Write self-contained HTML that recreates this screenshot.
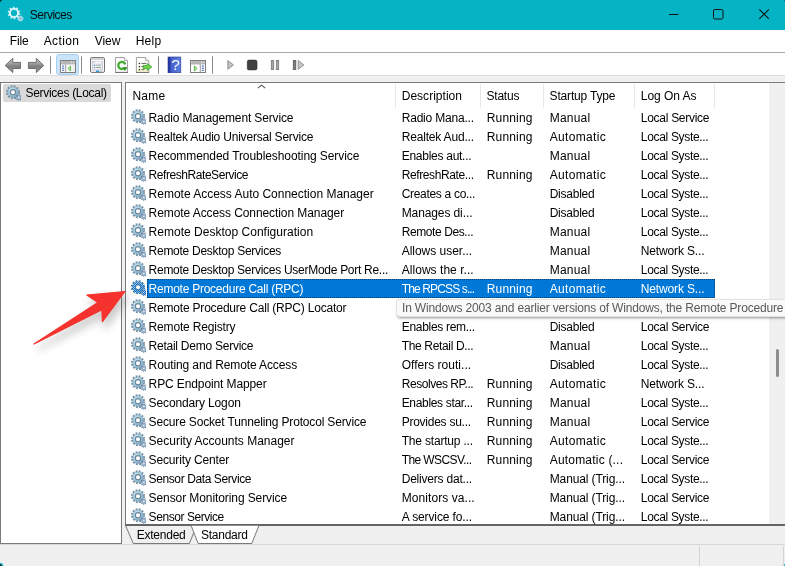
<!DOCTYPE html>
<html><head><meta charset="utf-8"><title>Services</title>
<style>
*{box-sizing:border-box;margin:0;padding:0}
html,body{width:785px;height:566px;overflow:hidden;background:#f0f0f0}
body{position:relative;font-family:"Liberation Sans",sans-serif;font-size:12px;color:#000;letter-spacing:-0.25px}
.abs{position:absolute}
#title{left:0;top:0;width:785px;height:30px;background:#04b4c5}
#title .t{position:absolute;left:30px;top:7px;font-size:12.5px;color:#111}
#menu{left:0;top:30px;width:785px;height:22px;background:#fff}
#menu span{position:absolute;top:4px;font-size:12.5px}
#tbline{left:0;top:52px;width:785px;height:1px;background:#a8a8a8}
#toolbar{left:0;top:53px;width:785px;height:23px;background:#fff;border-bottom:1px solid #dedede}
.sep{position:absolute;top:3px;width:1px;height:18px;background:#8c8c8c}
#tree{left:0;top:82px;width:122px;height:462px;background:#fff;border:1px solid #7a7a7a}
#treeitem{left:3px;top:84px;width:108px;height:18px;background:#d9d9d9;border-radius:2px}
#list{left:125px;top:82px;width:660px;height:444px;background:#fff;border-left:1px solid #7a7a7a;border-top:1px solid #7a7a7a;border-bottom:2px solid #646464}
#sb{left:769px;top:83px;width:16px;height:441px;background:#f0f0f0}
#thumb{left:776px;top:349px;width:3px;height:28px;background:#8d8d8d;border-radius:1.5px}
.hsep{position:absolute;top:84px;width:1px;height:24px;background:#e7e7e7}
.h{position:absolute;top:89px;white-space:nowrap}
.gi{position:absolute;left:130px}
.c{position:absolute;white-space:nowrap;line-height:14px}
.selbg{position:absolute;left:147px;width:568px;height:19px;background:#0078d7;border:1px dotted rgba(10,20,40,.6)}
#tip{left:396px;top:299px;width:400px;height:18px;background:#f9f9f9;border:1px solid #e2e2e2;border-radius:3.5px;box-shadow:0 3px 3px -2px rgba(0,0,0,.42),0 0 1px rgba(0,0,0,.12)}
#status{left:0;top:544px;width:785px;height:22px;background:#f0f0f0;border-top:1px solid #d7d7d7}
#w{position:absolute;left:0;top:0;width:785px;height:566px;will-change:transform}
</style></head><body><div id="w">
<svg width="0" height="0" style="position:absolute">
<defs>
<radialGradient id="gg" cx="35%" cy="30%" r="80%"><stop offset="0" stop-color="#c8e2ee"/><stop offset="0.55" stop-color="#9fc6db"/><stop offset="1" stop-color="#7fa2c0"/></radialGradient>
<g id="gear">
 <circle cx="8" cy="7.2" r="5.9" fill="none" stroke="#6f8da3" stroke-width="2.2" stroke-dasharray="1.8 1.289"/>
 <circle cx="8" cy="7.2" r="5.3" fill="url(#gg)" stroke="#86a6ba" stroke-width="0.6"/>
 <circle cx="8" cy="7.2" r="2.6" fill="#fff" stroke="#688698" stroke-width="1.1"/>
 <circle cx="13.8" cy="12.5" r="2.7" fill="none" stroke="#5f7c9c" stroke-width="1.3" stroke-dasharray="0.95 0.93"/>
 <circle cx="13.8" cy="12.5" r="2.2" fill="#9db6cf" stroke="#6f8cab" stroke-width="0.5"/>
 <circle cx="13.8" cy="12.5" r="0.8" fill="#e8f0f6"/>
</g>
<g id="gears">
 <use href="#gear"/>
 <rect x="0" y="0" width="16" height="16" fill="url(#chk)" mask="url(#gm)"/>
</g>
<pattern id="chk" width="2" height="2" patternUnits="userSpaceOnUse"><rect x="0" y="0" width="1" height="1" fill="#0a6fd0"/><rect x="1" y="1" width="1" height="1" fill="#0a6fd0"/></pattern>
<mask id="gm" maskUnits="userSpaceOnUse" x="0" y="0" width="16" height="16"><circle cx="8" cy="7.2" r="5.9" fill="none" stroke="#fff" stroke-width="2.2" stroke-dasharray="1.8 1.289"/><circle cx="8" cy="7.2" r="5.5" fill="#fff"/><circle cx="13.8" cy="12.5" r="2.7" fill="none" stroke="#fff" stroke-width="1.3" stroke-dasharray="0.95 0.93"/><circle cx="13.8" cy="12.5" r="2.4" fill="#fff"/><circle cx="8" cy="7.2" r="2.1" fill="#000"/></mask>
</defs></svg>

<div id="title" class="abs"></div>
<svg class="abs" style="left:0;top:0" width="785" height="29" viewBox="0 0 785 29">
<path d="M0 0 H3 A3 3 0 0 0 0 3 Z" fill="#050505"/>
<path d="M785 0 H783.5 A1.5 1.5 0 0 1 785 1.5 Z" fill="#0a0a0a"/>
<!-- app icon -->
<circle cx="14" cy="13" r="5.3" fill="none" stroke="#c9ecf6" stroke-width="2" stroke-dasharray="1.7 1.63"/>
<circle cx="14" cy="13" r="4.1" fill="none" stroke="#e3f4fa" stroke-width="1.9"/>
<circle cx="20.4" cy="18.5" r="1.9" fill="#7fb9c9" stroke="#b4e2f0" stroke-width="1.2"/>
<circle cx="20.4" cy="18.5" r="2.7" fill="none" stroke="#a9dcec" stroke-width="0.8" stroke-dasharray="0.9 0.8"/>
<!-- window controls -->
<rect x="669" y="14" width="9.5" height="1" fill="#111"/>
<rect x="713.5" y="9.5" width="9.5" height="9.5" rx="1.4" fill="none" stroke="#111" stroke-width="1"/>
<path d="M759.3 9.3 L768.9 18.9 M768.9 9.3 L759.3 18.9" stroke="#111" stroke-width="1.05" fill="none"/>
</svg>

<div id="menu" class="abs"></div>
<div id="tbline" class="abs"></div>
<div id="toolbar" class="abs">
<svg class="abs" style="left:0;top:0" width="785" height="23" viewBox="0 53 785 23">
<defs>
<linearGradient id="ag" x1="0" y1="0" x2="0" y2="1"><stop offset="0" stop-color="#c4c4c4"/><stop offset="0.3" stop-color="#a8a8a8"/><stop offset="0.6" stop-color="#7c7c7c"/><stop offset="1" stop-color="#b0b0b0"/></linearGradient>
<linearGradient id="hg" x1="0" y1="0" x2="1" y2="0"><stop offset="0" stop-color="#3d56c4"/><stop offset="1" stop-color="#5e7fe0"/></linearGradient>
<linearGradient id="pg" x1="0" y1="0" x2="0" y2="1"><stop offset="0" stop-color="#ffffff"/><stop offset="1" stop-color="#f4f4f4"/></linearGradient>
<linearGradient id="pgy" x1="0" y1="0" x2="0" y2="1"><stop offset="0" stop-color="#ffffff"/><stop offset="0.6" stop-color="#fdfdf4"/><stop offset="1" stop-color="#f3f3c8"/></linearGradient>
</defs>
<!-- back / forward -->
<path d="M5.2 65.4 L12.8 58.4 V62.4 H20.5 V68.5 H12.8 V72.5 Z" fill="url(#ag)" stroke="#6c6c6c" stroke-width="1" stroke-linejoin="round"/>
<path d="M43.8 65.4 L36.3 58.4 V62.4 H28.4 V68.5 H36.3 V72.5 Z" fill="url(#ag)" stroke="#6c6c6c" stroke-width="1" stroke-linejoin="round"/>
<rect x="50" y="56.3" width="1" height="17.4" fill="#8a8a8a"/>
<!-- active button -->
<rect x="56.5" y="54.5" width="22" height="20" rx="2.5" fill="#cce4f8" stroke="#a6d0f4" stroke-width="1"/>
<!-- console tree icon -->
<g>
<rect x="60.5" y="60.5" width="15" height="12" fill="#fff" stroke="#7e7e7e" stroke-width="1"/>
<rect x="61" y="61" width="14" height="2.4" fill="#e4e4e4"/>
<rect x="61.6" y="61.5" width="9.4" height="1" fill="#8a8a8a"/><rect x="71.8" y="61.4" width="1.1" height="1.1" fill="#8a8a8a"/><rect x="73.6" y="61.4" width="1.1" height="1.1" fill="#8a8a8a"/>
<rect x="61" y="63.4" width="14" height="0.9" fill="#8c8c8c"/>
<rect x="65.3" y="64.3" width="0.9" height="8" fill="#8c8c8c"/>
<rect x="72.6" y="64.6" width="2.4" height="7.4" fill="#ececec"/>
<rect x="62" y="65.6" width="2.2" height="1" fill="#3b5fc0"/><rect x="62" y="67.7" width="2.2" height="1" fill="#3b5fc0"/><rect x="62" y="69.8" width="2.2" height="1" fill="#3b5fc0"/>
<path d="M70.6 66 L67.9 68.5 L70.6 71 Z" fill="#c5ecb0" stroke="#3fa32a" stroke-width="0.8" stroke-linejoin="round"/>
</g>
<rect x="81" y="56.3" width="1" height="17.4" fill="#8a8a8a"/>
<!-- properties icon -->
<g>
<rect x="90.5" y="57.6" width="14" height="14.8" rx="1.3" fill="#fafafa" stroke="#707070" stroke-width="1"/>
<rect x="91.2" y="58.3" width="12.6" height="1.5" fill="#c9c9c9"/>
<rect x="92.6" y="61.5" width="9.8" height="8.6" fill="#e9e9f4" stroke="#b4b4c4" stroke-width="0.6"/>
<rect x="95.6" y="61.5" width="2.2" height="1.3" fill="#fff"/><rect x="98.6" y="61.5" width="2.4" height="1.3" fill="#fff"/>
<rect x="94" y="64.6" width="1.1" height="1.1" fill="#3b78c8"/><rect x="96.2" y="64.7" width="4.8" height="0.9" fill="#8fa88f"/>
<rect x="94" y="67" width="1.1" height="1.1" fill="#8a6fc0"/><rect x="96.2" y="67.1" width="4.8" height="0.9" fill="#8fa88f"/>
<rect x="96" y="70.6" width="3.2" height="1.4" fill="#2a9be0"/><rect x="100.2" y="70.6" width="2.2" height="1.4" fill="#c4c4c4"/>
</g>
<!-- refresh icon -->
<g>
<path d="M115.5 57.5 H124.5 L127.5 60.5 V72.4 H115.5 Z" fill="url(#pg)" stroke="#9a9a9a" stroke-width="0.9"/>
<path d="M124.5 57.5 V60.5 H127.5" fill="#fff" stroke="#9a9a9a" stroke-width="0.8"/>
<rect x="115.2" y="72.1" width="12.7" height="0.9" fill="#6e6e6e"/>
<path d="M124.3 68.0 A3.55 3.55 0 1 1 125.2 64.3" fill="none" stroke="#43ad2f" stroke-width="2.3"/>
<path d="M122.6 66.9 L127.4 67.3 L125.0 71.0 Z" fill="#2c9020"/>
</g>
<!-- export icon -->
<g>
<path d="M136.4 57.5 H145.6 L148.8 60.7 V72.4 H136.4 Z" fill="url(#pgy)" stroke="#9a9a9a" stroke-width="0.9"/>
<path d="M145.6 57.5 V60.7 H148.8" fill="#fff" stroke="#9a9a9a" stroke-width="0.8"/>
<rect x="136.1" y="72.1" width="13" height="0.9" fill="#6e6e6e"/>
<rect x="138.8" y="62.8" width="1.3" height="1.3" fill="#222"/><rect x="138.8" y="66" width="1.3" height="1.3" fill="#222"/><rect x="138.8" y="69" width="1.3" height="1.3" fill="#222"/>
<rect x="141.4" y="62.9" width="5" height="1" fill="#666"/><rect x="141.4" y="66.1" width="3" height="1" fill="#666"/><rect x="141.4" y="69.1" width="3" height="1" fill="#666"/>
<path d="M143.2 65.4 H147.4 V63.6 L151.8 67 L147.4 70.4 V68.6 H143.2 Z" fill="#6fcf4a" stroke="#3aa428" stroke-width="0.8" stroke-linejoin="round"/>
</g>
<rect x="158" y="56.3" width="1" height="17.4" fill="#8a8a8a"/>
<!-- help icon -->
<g>
<rect x="168" y="57" width="12.8" height="15.7" fill="url(#hg)"/>
<rect x="168" y="57" width="2.4" height="15.7" fill="#2537a0"/>
<rect x="168" y="57" width="12.8" height="15.7" fill="none" stroke="#27358f" stroke-width="0.6"/>
<text x="175.5" y="70.2" font-family="Liberation Sans, sans-serif" font-size="15.5" fill="#fff" text-anchor="middle">?</text>
</g>
<!-- action pane icon -->
<g>
<rect x="190.5" y="60.5" width="15" height="12" fill="#fff" stroke="#7e7e7e" stroke-width="1"/>
<rect x="191" y="61" width="14" height="2.4" fill="#e4e4e4"/>
<rect x="191.6" y="61.5" width="9.4" height="1" fill="#8a8a8a"/><rect x="201.8" y="61.4" width="1.1" height="1.1" fill="#8a8a8a"/><rect x="203.6" y="61.4" width="1.1" height="1.1" fill="#8a8a8a"/>
<rect x="191" y="63.4" width="14" height="0.9" fill="#8c8c8c"/>
<rect x="199.8" y="64.3" width="0.9" height="8" fill="#8c8c8c"/>
<rect x="201.8" y="65.6" width="2.2" height="1" fill="#3b5fc0"/><rect x="201.8" y="67.7" width="2.2" height="1" fill="#3b5fc0"/><rect x="201.8" y="69.8" width="2.2" height="1" fill="#3b5fc0"/>
<path d="M194.4 66 L197.1 68.5 L194.4 71 Z" fill="#c5ecb0" stroke="#3fa32a" stroke-width="0.8" stroke-linejoin="round"/>
</g>
<rect x="212" y="56.3" width="1" height="17.4" fill="#8a8a8a"/>
<!-- play -->
<path d="M227.8 60.5 L233.4 64.9 L227.8 69.3 Z" fill="#c4c4c4" stroke="#8a8a8a" stroke-width="0.9" stroke-linejoin="round"/>
<!-- stop -->
<rect x="247.3" y="60.1" width="9.7" height="9.8" rx="1.6" fill="#404040" stroke="#2c2c2c" stroke-width="0.6"/>
<!-- pause -->
<rect x="271.3" y="60.4" width="2.4" height="9.2" fill="#a4a4a4" stroke="#787878" stroke-width="0.8"/>
<rect x="276.3" y="60.4" width="2.4" height="9.2" fill="#a4a4a4" stroke="#787878" stroke-width="0.8"/>
<!-- restart -->
<rect x="293.3" y="60.4" width="2.5" height="9.2" fill="#7a7a7a" stroke="#5a5a5a" stroke-width="0.8"/>
<path d="M298.2 60.5 L303.9 64.9 L298.2 69.3 Z" fill="#c4c4c4" stroke="#8a8a8a" stroke-width="0.9" stroke-linejoin="round"/>
</svg>

</div>
<div id="tree" class="abs"></div>
<div id="treeitem" class="abs"></div>
<svg class="abs" style="left:5px;top:85px" width="16" height="16" viewBox="0 0 16 16"><use href="#gear"/></svg>
<div id="list" class="abs"></div>
<div class="hsep" style="left:395px"></div><div class="hsep" style="left:480px"></div><div class="hsep" style="left:543px"></div><div class="hsep" style="left:634px"></div><div class="hsep" style="left:714px"></div>
<svg class="abs" style="left:255px;top:83px" width="14" height="7" viewBox="255 83 14 7"><path d="M257.8 88.2 L261.5 85.1 L265.2 88.2" fill="none" stroke="#555" stroke-width="1.1"/></svg>
<svg class="gi" style="top:109px" width="16" height="16" viewBox="0 0 16 16"><use href="#gear"/></svg>
<span class="c" style="left:148.6px;top:111px;letter-spacing:-0.138px">Radio Management Service</span>
<span class="c" style="left:401.7px;top:111px;letter-spacing:-0.193px">Radio Mana...</span>
<span class="c" style="left:486.7px;top:111px;letter-spacing:0.183px">Running</span>
<span class="c" style="left:549.7px;top:111px;letter-spacing:0.208px">Manual</span>
<span class="c" style="left:640.8px;top:111px;letter-spacing:-0.279px">Local Service</span>
<svg class="gi" style="top:128px" width="16" height="16" viewBox="0 0 16 16"><use href="#gear"/></svg>
<span class="c" style="left:148.6px;top:130px;letter-spacing:-0.198px">Realtek Audio Universal Service</span>
<span class="c" style="left:401.7px;top:130px;letter-spacing:-0.178px">Realtek Aud...</span>
<span class="c" style="left:486.7px;top:130px;letter-spacing:0.183px">Running</span>
<span class="c" style="left:549.7px;top:130px;letter-spacing:0.330px">Automatic</span>
<span class="c" style="left:640.8px;top:130px;letter-spacing:-0.319px">Local Syste...</span>
<svg class="gi" style="top:147px" width="16" height="16" viewBox="0 0 16 16"><use href="#gear"/></svg>
<span class="c" style="left:148.6px;top:149px;letter-spacing:-0.078px">Recommended Troubleshooting Service</span>
<span class="c" style="left:401.7px;top:149px;letter-spacing:-0.269px">Enables aut...</span>
<span class="c" style="left:549.7px;top:149px;letter-spacing:0.208px">Manual</span>
<span class="c" style="left:640.8px;top:149px;letter-spacing:-0.319px">Local Syste...</span>
<svg class="gi" style="top:166px" width="16" height="16" viewBox="0 0 16 16"><use href="#gear"/></svg>
<span class="c" style="left:148.6px;top:168px;letter-spacing:-0.441px">RefreshRateService</span>
<span class="c" style="left:401.7px;top:168px;letter-spacing:-0.383px">RefreshRate...</span>
<span class="c" style="left:486.7px;top:168px;letter-spacing:0.183px">Running</span>
<span class="c" style="left:549.7px;top:168px;letter-spacing:0.330px">Automatic</span>
<span class="c" style="left:640.8px;top:168px;letter-spacing:-0.319px">Local Syste...</span>
<svg class="gi" style="top:185px" width="16" height="16" viewBox="0 0 16 16"><use href="#gear"/></svg>
<span class="c" style="left:148.6px;top:187px;letter-spacing:-0.010px">Remote Access Auto Connection Manager</span>
<span class="c" style="left:401.7px;top:187px;letter-spacing:-0.310px">Creates a co...</span>
<span class="c" style="left:549.7px;top:187px;letter-spacing:-0.243px">Disabled</span>
<span class="c" style="left:640.8px;top:187px;letter-spacing:-0.319px">Local Syste...</span>
<svg class="gi" style="top:204px" width="16" height="16" viewBox="0 0 16 16"><use href="#gear"/></svg>
<span class="c" style="left:148.6px;top:206px;letter-spacing:-0.081px">Remote Access Connection Manager</span>
<span class="c" style="left:401.7px;top:206px;letter-spacing:-0.104px">Manages di...</span>
<span class="c" style="left:549.7px;top:206px;letter-spacing:-0.243px">Disabled</span>
<span class="c" style="left:640.8px;top:206px;letter-spacing:-0.319px">Local Syste...</span>
<svg class="gi" style="top:223px" width="16" height="16" viewBox="0 0 16 16"><use href="#gear"/></svg>
<span class="c" style="left:148.6px;top:225px;letter-spacing:0.015px">Remote Desktop Configuration</span>
<span class="c" style="left:401.7px;top:225px;letter-spacing:-0.409px">Remote Des...</span>
<span class="c" style="left:549.7px;top:225px;letter-spacing:0.208px">Manual</span>
<span class="c" style="left:640.8px;top:225px;letter-spacing:-0.319px">Local Syste...</span>
<svg class="gi" style="top:242px" width="16" height="16" viewBox="0 0 16 16"><use href="#gear"/></svg>
<span class="c" style="left:148.6px;top:244px;letter-spacing:-0.274px">Remote Desktop Services</span>
<span class="c" style="left:401.7px;top:244px;letter-spacing:-0.023px">Allows user...</span>
<span class="c" style="left:549.7px;top:244px;letter-spacing:0.208px">Manual</span>
<span class="c" style="left:640.8px;top:244px;letter-spacing:-0.151px">Network S...</span>
<svg class="gi" style="top:261px" width="16" height="16" viewBox="0 0 16 16"><use href="#gear"/></svg>
<span class="c" style="left:148.6px;top:263px;letter-spacing:-0.279px">Remote Desktop Services UserMode Port Re...</span>
<span class="c" style="left:401.7px;top:263px;letter-spacing:0.045px">Allows the r...</span>
<span class="c" style="left:549.7px;top:263px;letter-spacing:0.208px">Manual</span>
<span class="c" style="left:640.8px;top:263px;letter-spacing:-0.319px">Local Syste...</span>
<div class="selbg" style="top:279px"></div>
<svg class="gi" style="top:280px" width="16" height="16" viewBox="0 0 16 16"><use href="#gears"/></svg>
<span class="c" style="left:148.6px;top:282px;letter-spacing:-0.250px;color:#fff">Remote Procedure Call (RPC)</span>
<span class="c" style="left:401.7px;top:282px;letter-spacing:-0.862px;color:#fff">The RPCSS s...</span>
<span class="c" style="left:486.7px;top:282px;letter-spacing:0.183px;color:#fff">Running</span>
<span class="c" style="left:549.7px;top:282px;letter-spacing:0.330px;color:#fff">Automatic</span>
<span class="c" style="left:640.8px;top:282px;letter-spacing:-0.151px;color:#fff">Network S...</span>
<svg class="gi" style="top:299px" width="16" height="16" viewBox="0 0 16 16"><use href="#gear"/></svg>
<span class="c" style="left:148.6px;top:301px;letter-spacing:-0.201px">Remote Procedure Call (RPC) Locator</span>
<svg class="gi" style="top:318px" width="16" height="16" viewBox="0 0 16 16"><use href="#gear"/></svg>
<span class="c" style="left:148.6px;top:320px;letter-spacing:-0.170px">Remote Registry</span>
<span class="c" style="left:401.7px;top:320px;letter-spacing:-0.298px">Enables rem...</span>
<span class="c" style="left:549.7px;top:320px;letter-spacing:-0.243px">Disabled</span>
<span class="c" style="left:640.8px;top:320px;letter-spacing:-0.279px">Local Service</span>
<svg class="gi" style="top:337px" width="16" height="16" viewBox="0 0 16 16"><use href="#gear"/></svg>
<span class="c" style="left:148.6px;top:339px;letter-spacing:-0.249px">Retail Demo Service</span>
<span class="c" style="left:401.7px;top:339px;letter-spacing:-0.336px">The Retail D...</span>
<span class="c" style="left:549.7px;top:339px;letter-spacing:0.208px">Manual</span>
<span class="c" style="left:640.8px;top:339px;letter-spacing:-0.319px">Local Syste...</span>
<svg class="gi" style="top:356px" width="16" height="16" viewBox="0 0 16 16"><use href="#gear"/></svg>
<span class="c" style="left:148.6px;top:358px;letter-spacing:-0.118px">Routing and Remote Access</span>
<span class="c" style="left:401.7px;top:358px;letter-spacing:0.019px">Offers routi...</span>
<span class="c" style="left:549.7px;top:358px;letter-spacing:-0.243px">Disabled</span>
<span class="c" style="left:640.8px;top:358px;letter-spacing:-0.319px">Local Syste...</span>
<svg class="gi" style="top:375px" width="16" height="16" viewBox="0 0 16 16"><use href="#gear"/></svg>
<span class="c" style="left:148.6px;top:377px;letter-spacing:-0.110px">RPC Endpoint Mapper</span>
<span class="c" style="left:401.7px;top:377px;letter-spacing:-0.447px">Resolves RP...</span>
<span class="c" style="left:486.7px;top:377px;letter-spacing:0.183px">Running</span>
<span class="c" style="left:549.7px;top:377px;letter-spacing:0.330px">Automatic</span>
<span class="c" style="left:640.8px;top:377px;letter-spacing:-0.151px">Network S...</span>
<svg class="gi" style="top:394px" width="16" height="16" viewBox="0 0 16 16"><use href="#gear"/></svg>
<span class="c" style="left:148.6px;top:396px;letter-spacing:-0.127px">Secondary Logon</span>
<span class="c" style="left:401.7px;top:396px;letter-spacing:-0.332px">Enables star...</span>
<span class="c" style="left:486.7px;top:396px;letter-spacing:0.183px">Running</span>
<span class="c" style="left:549.7px;top:396px;letter-spacing:0.208px">Manual</span>
<span class="c" style="left:640.8px;top:396px;letter-spacing:-0.319px">Local Syste...</span>
<svg class="gi" style="top:413px" width="16" height="16" viewBox="0 0 16 16"><use href="#gear"/></svg>
<span class="c" style="left:148.6px;top:415px;letter-spacing:-0.162px">Secure Socket Tunneling Protocol Service</span>
<span class="c" style="left:401.7px;top:415px;letter-spacing:-0.254px">Provides su...</span>
<span class="c" style="left:486.7px;top:415px;letter-spacing:0.183px">Running</span>
<span class="c" style="left:549.7px;top:415px;letter-spacing:0.208px">Manual</span>
<span class="c" style="left:640.8px;top:415px;letter-spacing:-0.279px">Local Service</span>
<svg class="gi" style="top:432px" width="16" height="16" viewBox="0 0 16 16"><use href="#gear"/></svg>
<span class="c" style="left:148.6px;top:434px;letter-spacing:-0.007px">Security Accounts Manager</span>
<span class="c" style="left:401.7px;top:434px;letter-spacing:-0.189px">The startup ...</span>
<span class="c" style="left:486.7px;top:434px;letter-spacing:0.183px">Running</span>
<span class="c" style="left:549.7px;top:434px;letter-spacing:0.330px">Automatic</span>
<span class="c" style="left:640.8px;top:434px;letter-spacing:-0.319px">Local Syste...</span>
<svg class="gi" style="top:451px" width="16" height="16" viewBox="0 0 16 16"><use href="#gear"/></svg>
<span class="c" style="left:148.6px;top:453px;letter-spacing:-0.143px">Security Center</span>
<span class="c" style="left:401.7px;top:453px;letter-spacing:-0.593px">The WSCSV...</span>
<span class="c" style="left:486.7px;top:453px;letter-spacing:0.183px">Running</span>
<span class="c" style="left:549.7px;top:453px;letter-spacing:0.201px">Automatic (...</span>
<span class="c" style="left:640.8px;top:453px;letter-spacing:-0.279px">Local Service</span>
<svg class="gi" style="top:470px" width="16" height="16" viewBox="0 0 16 16"><use href="#gear"/></svg>
<span class="c" style="left:148.6px;top:472px;letter-spacing:-0.398px">Sensor Data Service</span>
<span class="c" style="left:401.7px;top:472px;letter-spacing:-0.211px">Delivers dat...</span>
<span class="c" style="left:549.7px;top:472px;letter-spacing:-0.116px">Manual (Trig...</span>
<span class="c" style="left:640.8px;top:472px;letter-spacing:-0.319px">Local Syste...</span>
<svg class="gi" style="top:489px" width="16" height="16" viewBox="0 0 16 16"><use href="#gear"/></svg>
<span class="c" style="left:148.6px;top:491px;letter-spacing:-0.089px">Sensor Monitoring Service</span>
<span class="c" style="left:401.7px;top:491px;letter-spacing:0.075px">Monitors va...</span>
<span class="c" style="left:549.7px;top:491px;letter-spacing:-0.116px">Manual (Trig...</span>
<span class="c" style="left:640.8px;top:491px;letter-spacing:-0.279px">Local Service</span>
<svg class="gi" style="top:508px" width="16" height="16" viewBox="0 0 16 16"><use href="#gear"/></svg>
<span class="c" style="left:148.6px;top:510px;letter-spacing:-0.437px">Sensor Service</span>
<span class="c" style="left:401.7px;top:510px;letter-spacing:-0.117px">A service fo...</span>
<span class="c" style="left:549.7px;top:510px;letter-spacing:-0.116px">Manual (Trig...</span>
<span class="c" style="left:640.8px;top:510px;letter-spacing:-0.319px">Local Syste...</span>
<div id="sb" class="abs"></div><div id="thumb" class="abs"></div>
<div id="tip" class="abs"></div>
<svg class="abs" style="left:122px;top:524px" width="200" height="22" viewBox="122 524 200 22">
<path d="M125.5 525.5 L133.3 543.5 H189.4 L193.6 533" fill="none" stroke="#6a6a6a" stroke-width="0.9"/>
<path d="M191.2 525.8 L198.2 543.5 H251.8 L258.8 525.8 Z" fill="#fff" stroke="none"/>
<path d="M191.2 525.8 L198.2 543.5 H251.8 L258.8 525.8" fill="none" stroke="#6a6a6a" stroke-width="0.9"/>
</svg>

<span class="c" style="left:29.7px;top:8px;letter-spacing:-0.488px;color:#0b0b0b">Services</span>
<span class="c" style="left:9.7px;top:34px;letter-spacing:-0.115px">File</span>
<span class="c" style="left:43.7px;top:34px;letter-spacing:0.368px">Action</span>
<span class="c" style="left:94.8px;top:34px;letter-spacing:-0.099px">View</span>
<span class="c" style="left:135.7px;top:34px;letter-spacing:0.271px">Help</span>
<span class="c" style="left:25.5px;top:86px;letter-spacing:-0.302px">Services (Local)</span>
<span class="c" style="left:132.5px;top:89px;letter-spacing:0.195px">Name</span>
<span class="c" style="left:401.7px;top:89px;letter-spacing:0.027px">Description</span>
<span class="c" style="left:486.5px;top:89px;letter-spacing:-0.226px">Status</span>
<span class="c" style="left:549.6px;top:89px;letter-spacing:-0.175px">Startup Type</span>
<span class="c" style="left:640.8px;top:89px;letter-spacing:-0.043px">Log On As</span>
<span class="c" style="left:402.0px;top:301px;letter-spacing:-0.167px;color:#595959">In Windows 2003 and earlier versions of Windows, the Remote Procedure</span>
<span class="c" style="left:136.7px;top:528px;letter-spacing:-0.231px">Extended</span>
<span class="c" style="left:200.9px;top:528px;letter-spacing:-0.229px">Standard</span>
<div id="status" class="abs"></div>
<svg class="abs" style="left:0;top:260px" width="160" height="110" viewBox="0 260 160 110">
<defs><filter id="ash" x="-20%" y="-20%" width="150%" height="150%"><feGaussianBlur stdDeviation="4"/></filter></defs>
<path d="M34 344 L97.9 302.6 L86.8 295.1 L124.9 291.5 L102.4 321.7 L101.9 309.7 Z" fill="#000" stroke="#000" stroke-width="3" opacity="0.2" filter="url(#ash)" transform="translate(3,6)"/>
<path d="M34 344 L97.9 302.6 L86.8 295.1 L124.9 291.5 L102.4 321.7 L101.9 309.7 Z" fill="#f5322d" stroke="#f5322d" stroke-width="1.2" stroke-linejoin="round"/>
</svg>
<svg class="abs" style="left:0;top:556px" width="12" height="10" viewBox="0 556 12 10">
<circle cx="0" cy="566" r="4.3" fill="#d3f6f6"/><circle cx="0" cy="566" r="3.1" fill="#1aa6b6"/><circle cx="0" cy="566" r="1.8" fill="#04181c"/>
</svg>
<svg class="abs" style="left:775px;top:556px" width="10" height="10" viewBox="775 556 10 10">
<circle cx="785" cy="566" r="2.6" fill="#8fdbe3"/><circle cx="785" cy="566" r="1.5" fill="#1aa6b6"/>
</svg>
<div class="abs" style="left:699px;top:546px;width:1px;height:20px;background:#d4d4d4"></div>
<div class="abs" style="left:783px;top:546px;width:1px;height:20px;background:#d4d4d4"></div>

</div></body></html>
